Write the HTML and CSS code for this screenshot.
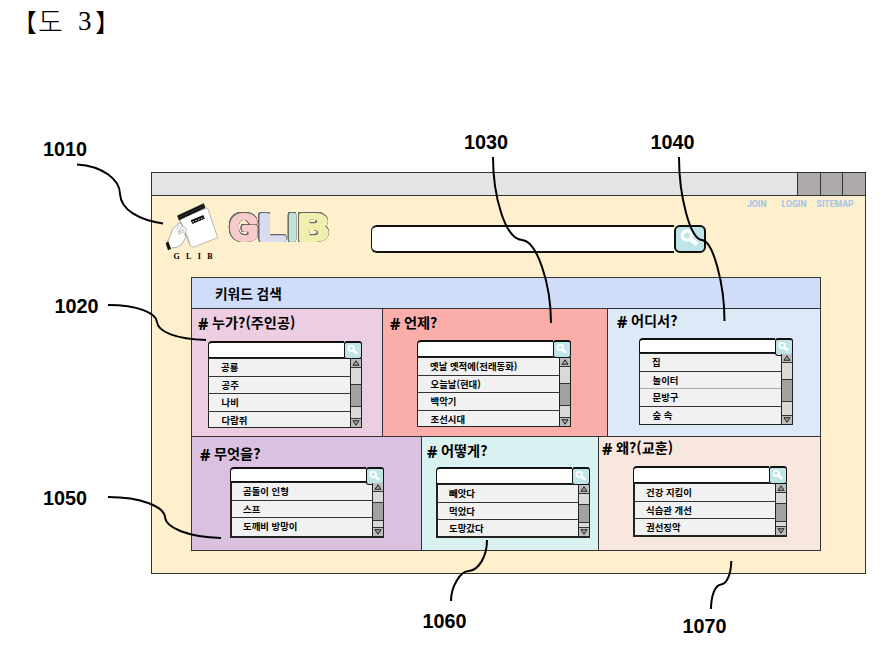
FILE: index.html
```html
<!DOCTYPE html>
<html lang="ko">
<head>
<meta charset="utf-8">
<title>GLIB 키워드 검색</title>
<link rel="stylesheet" href="styles.css">
</head>
<body>
<svg class="defs" aria-hidden="true">
  <symbol id="lens" viewBox="0 0 30 27">
    <circle cx="11.5" cy="9.5" r="5.2" fill="none" stroke="#fff" stroke-width="3.6"/>
    <path d="M15 13 L23 19.5" stroke="#fff" stroke-width="4.8"/>
  </symbol>
  <symbol id="up" viewBox="0 0 9 7"><path d="M.9 6.2 L4.5 .9 L8.1 6.2Z" fill="#999" stroke="#222" stroke-width="1.1"/></symbol>
  <symbol id="down" viewBox="0 0 9 7"><path d="M.9 .8 L4.5 6.1 L8.1 .8Z" fill="#999" stroke="#222" stroke-width="1.1"/></symbol>
</svg>

<main class="figure">
  <h1 class="caption"><span class="open">【</span><span class="do">도</span><span class="num">3</span><span class="close">】</span></h1>

  <section class="window">
    <div class="titlebar"><i></i><i></i><i></i></div>
    <header class="head">
      <div class="logo">
        <svg class="mark" viewBox="0 0 168 134">
          <path d="M52 29 L134 -3 L139 3 L167 86 L96 114 Q88 116 84 108 L77 84Z" fill="#fff" stroke="#777" stroke-width="1.5"/>
          <path d="M47 20 L125 -16 L129 -4 L51 33Z" fill="#111" stroke="#111" stroke-width="2"/>
          <path d="M50 26 L126 -9" stroke="#777" stroke-width="1"/>
          <path d="M52 32 L84 108" stroke="#666" stroke-width="1"/>
          <path d="M86 34 L124 18 L128 29 L91 45Z" fill="#111"/>
          <path d="M92 39 L123 26" stroke="#fff" stroke-width="3" stroke-dasharray="4 5"/>
          <path d="M15 102 L27 76 L31 61 L51 43 Q58 40 60 49 L71 57 Q77 64 68 75 L72 84 L59 106 Q42 119 26 117Z" fill="#fff" stroke="#666" stroke-width="1.5"/>
          <path d="M50 49 L45 61 M60 49 L49 70 L67 62 M48 76 L67 68" fill="none" stroke="#777" stroke-width="1.5"/>
          <path d="M11 103 L19 97 L27 120 L18 124Z" fill="#111"/>
        </svg>
        <div class="mark-name">GLIB</div>
      </div>
      <svg class="wordmark" viewBox="0 0 104 36" role="img">
        <text class="g" x="2" y="30.5" textLength="28" lengthAdjust="spacingAndGlyphs">G</text>
        <text class="l" x="30.500" y="30.5" textLength="26" lengthAdjust="spacingAndGlyphs">L</text>
        <text class="i" x="60" y="30.5" textLength="9" lengthAdjust="spacingAndGlyphs">I</text>
        <text class="b" x="70" y="30.5" textLength="30.5" lengthAdjust="spacingAndGlyphs">B</text>
      </svg>
      <div class="search main-search"><div class="field"></div><div class="go"><svg><use href="#lens"/></svg></div></div>
      <nav class="nav"><a>JOIN</a><a>LOGIN</a><a>SITEMAP</a></nav>
    </header>

    <section class="panel">
      <h2 class="panel-title">키워드 검색</h2>
      <div class="row row-top">
        <article class="card who">
          <h3><b>#</b>누가?(주인공)</h3>
          <div class="picker">
            <div class="search"><div class="field"></div><div class="go"><svg><use href="#lens"/></svg></div></div>
            <div class="list"><ul><li>공룡</li><li>공주</li><li>나비</li><li>다람쥐</li></ul>
              <div class="bar"><svg><use href="#up"/></svg><span class="thumb"></span><svg><use href="#down"/></svg></div></div>
          </div>
        </article>
        <article class="card when">
          <h3><b>#</b>언제?</h3>
          <div class="picker">
            <div class="search"><div class="field"></div><div class="go"><svg><use href="#lens"/></svg></div></div>
            <div class="list"><ul><li>옛날 옛적에(전래동화)</li><li>오늘날(현대)</li><li>백악기</li><li>조선시대</li></ul>
              <div class="bar"><svg><use href="#up"/></svg><span class="thumb"></span><svg><use href="#down"/></svg></div></div>
          </div>
        </article>
        <article class="card where">
          <h3><b>#</b>어디서?</h3>
          <div class="picker">
            <div class="search"><div class="field"></div><div class="go"><svg><use href="#lens"/></svg></div></div>
            <div class="list"><ul><li>집</li><li class="faint">놀이터</li><li>문방구</li><li>숲 속</li></ul>
              <div class="bar"><svg><use href="#up"/></svg><span class="thumb"></span><svg><use href="#down"/></svg></div></div>
          </div>
        </article>
      </div>
      <div class="row row-bottom">
        <article class="card what">
          <h3><b>#</b>무엇을?</h3>
          <div class="picker">
            <div class="search"><div class="field"></div><div class="go"><svg><use href="#lens"/></svg></div></div>
            <div class="list"><ul><li>곰돌이 인형</li><li>스프</li><li>도깨비 방망이</li></ul>
              <div class="bar"><svg><use href="#up"/></svg><span class="thumb"></span><svg><use href="#down"/></svg></div></div>
          </div>
        </article>
        <article class="card how">
          <h3><b>#</b>어떻게?</h3>
          <div class="picker">
            <div class="search"><div class="field"></div><div class="go"><svg><use href="#lens"/></svg></div></div>
            <div class="list"><ul><li>빼앗다</li><li>먹었다</li><li>도망갔다</li></ul>
              <div class="bar"><svg><use href="#up"/></svg><span class="thumb"></span><svg><use href="#down"/></svg></div></div>
          </div>
        </article>
        <article class="card why">
          <h3><b>#</b>왜?(교훈)</h3>
          <div class="picker">
            <div class="search"><div class="field"></div><div class="go"><svg><use href="#lens"/></svg></div></div>
            <div class="list"><ul><li>건강 지킴이</li><li>식습관 개선</li><li>권선징악</li></ul>
              <div class="bar"><svg><use href="#up"/></svg><span class="thumb"></span><svg><use href="#down"/></svg></div></div>
          </div>
        </article>
      </div>
    </section>
  </section>

  <svg class="leaders" viewBox="0 0 889 652">
    <path d="M77 164.500 C103 166 120 180 120 194 C121 210 139 220 163 223.500"/>
    <path d="M108 305 C138 305 156 313 157 322 C158 332 176 339 206 340"/>
    <path d="M108 497 C142 497 164 507 165 517 C166 528 188 537 221 538"/>
    <path d="M493 157 C493 196 505 239 522 240 C537 241 551 284 551 323"/>
    <path d="M679 157 C679 196 690 239 702 240 C713 241 724.500 284 724.500 321"/>
    <path d="M487 540 C487 556 479 570 469 571 C460 571 451 587 451 601"/>
    <path d="M731.300 561 C731 574 727 584 721 584.500 C715 585 711 596 711 609"/>
    <g class="labels">
      <text x="43" y="156">1010</text>
      <text x="54.500" y="312.500">1020</text>
      <text x="464" y="149">1030</text>
      <text x="650.500" y="149">1040</text>
      <text x="43" y="504.500">1050</text>
      <text x="422.500" y="627.500">1060</text>
      <text x="682.500" y="632.500">1070</text>
    </g>
  </svg>
</main>
</body>
</html>
```
FILE: styles.css
```css
* { box-sizing: border-box; }

body {
  margin: 0;
  background: #fff;
  color: #000;
  font-family: "Noto Sans CJK KR", "Noto Sans", sans-serif;
}

h1, h2, h3, ul { margin: 0; padding: 0; list-style: none; font-weight: 700; }
.defs { position: absolute; width: 0; height: 0; }

.figure {
  position: relative;
  width: 889px;
  height: 652px;
  overflow: hidden;
}

.caption {
  display: flex;
  height: 172px;
  padding: 3px 0 0 12px;
  font: 300 25px/36px "Noto Sans CJK KR", serif;
}
.caption .open { width: 26px; }
.caption .do { width: 40px; font-size: 27px; }
.caption .num { width: 17px; font-family: "Liberation Serif", serif; font-size: 27px; }

.window {
  display: flex;
  flex-direction: column;
  width: 715px;
  height: 402px;
  margin-left: 151px;
  border: 1px solid #333;
  background: #feefcd;
}

.titlebar {
  display: flex;
  justify-content: flex-end;
  height: 23px;
  border-bottom: 1px solid #333;
  background: #e4e4e4;
}
.titlebar i { width: 22.670px; border-left: 1px solid #333; background: #aeaaa9; }

.head { display: flex; height: 81px; }

.logo { width: 76px; padding: 13px 0 0 10px; }
.mark { display: block; width: 56px; height: 44.700px; overflow: visible; }
.mark-name {
  padding-left: 11.500px;
  margin-top: -2px;
  font: 700 8px/9px "Liberation Serif", serif;
  letter-spacing: 6.400px;
}

.wordmark {
  width: 104px;
  height: 36px;
  margin: 13px 0 0 0;
  overflow: visible;
  filter: drop-shadow(.6px 0 0 #666) drop-shadow(-.6px 0 0 #666) drop-shadow(0 .6px 0 #666) drop-shadow(0 -.6px 0 #666);
}
.wordmark text {
  font: 400 34.500px Roboto, sans-serif;
  stroke-width: 4.200;
  stroke-linejoin: round;
}
.g { fill: #f8cbcb; stroke: #f8cbcb; }
.l { fill: #d9dcf0; stroke: #d9dcf0; }
.i { fill: #bce4d6; stroke: #bce4d6; }
.b { fill: #f0efae; stroke: #f0efae; }

.search { display: flex; }
.field { flex: 1; border: 2px solid #111; border-right: 0; border-radius: 4px 0 0 0; background: #fff; }
.go { border: 2px solid #111; border-radius: 3px; background: #bfe5e8; }
.go svg { display: block; width: 100%; height: 100%; }

.main-search { width: 335px; height: 28px; margin: 29px 0 0 39px; }
.main-search .field { border-width: 2px 0 2px 1px; border-radius: 6px 0 0 6px; }
.main-search .go { width: 32px; border-width: 2px; border-radius: 6px; }

.nav {
  display: flex;
  gap: 15px;
  margin: 2px 0 0 41px;
  color: #9fc5e8;
  font: 700 8.700px/12px Roboto, sans-serif;
}
.nav a:last-child { margin-left: -5px; }

.panel {
  width: 630px;
  height: 274px;
  margin-left: 39px;
  border: 1px solid #333;
}
.panel-title {
  height: 31px;
  padding-left: 23px;
  border-bottom: 1px solid #333;
  background: #d0ddf9;
  font-size: 13.700px;
  line-height: 31px;
}

.row { display: flex; }
.row-top { height: 128px; border-bottom: 1px solid #333; }
.row-bottom { height: 113px; }
.card { border-right: 1px solid #333; }
.card:last-child { border-right: 0; }
.card h3 { display: flex; height: 29px; font-size: 14.200px; line-height: 27px; white-space: nowrap; }
.card h3 b { width: 14px; font: 700 16px/30px "Noto Sans", sans-serif; }

.who { width: 191px; background: #edcde1; padding-left: 16px; }
.who h3 { margin-left: -10px; }
.who .picker { margin-top: 3px; }
.when { width: 225px; background: #fbaea9; padding-left: 34px; }
.when h3 { margin-left: -27px; }
.when .picker { margin-top: 2px; }
.where { width: 212px; background: #dde9f7; padding-left: 31px; }
.where h3 { margin: -2px 0 0 -22px; }
.where .picker { margin-top: 2px; }
.what { width: 230px; background: #dbc1e0; padding-left: 38px; }
.what h3 { margin: 3px 0 0 -30px; }
.what .picker { margin-top: -2px; }
.how { width: 177px; background: #d9f1f0; padding-left: 14px; }
.how h3 { margin-left: -9px; }
.how .picker { margin-top: 1px; }
.why { width: 221px; background: #f7e7de; padding-left: 34px; }
.why h3 { margin: -3px 0 0 -31px; }
.why .picker { margin-top: 3px; }

.picker { width: 154px; }
.picker .search { height: 17px; }
.picker .field { border-width: 2px 0 1px 1px; }
.picker .go { width: 18px; height: 18px; border-width: 2px 1px 1px; border-radius: 3px; }
.where .search, .what .search { height: 15px; }

.list {
  display: flex;
  width: 154px;
  height: 70px;
  border: 1px solid #222;
  background: #f1f1f1;
}
.list ul { flex: 1; }
.list li {
  height: 17.600px;
  padding-left: 12px;
  border-bottom: 1px solid #333;
  font-size: 9.400px;
  line-height: 17.500px;
  white-space: nowrap;
}
.list li:nth-child(n+2) { padding-left: 12.500px; }
.list li:last-child { border-bottom: 0; }
.list li.faint { border-color: #aaa; }
.where .list { height: 72px; }
.row-bottom .list { height: 54px; border-width: 1px 1px 2px 2px; }
.row-bottom .list li { padding-left: 11px; }
.what .list { height: 56px; }

.bar {
  display: grid;
  grid-template-rows: 9px 1fr 9px;
  width: 11px;
  border-left: 1px solid #222;
  background: #d9d9d9;
}
.bar svg { display: block; width: 10px; height: 9px; padding: 1px 0; border-bottom: 1px solid #333; background: #bdbdbd; }
.bar svg:last-child { border: 0; border-top: 1px solid #333; }
.thumb { height: 23px; margin-top: 16px; border: solid #333; border-width: 1px 0; background: #a2a2a2; }
.row-bottom .thumb { height: 19px; margin-top: 10px; }

.leaders { position: absolute; left: 0; top: 0; width: 889px; height: 652px; }
.leaders path { fill: none; stroke: #000; stroke-width: 2; }
.labels { font: 700 19.800px "Liberation Sans", sans-serif; }
```
